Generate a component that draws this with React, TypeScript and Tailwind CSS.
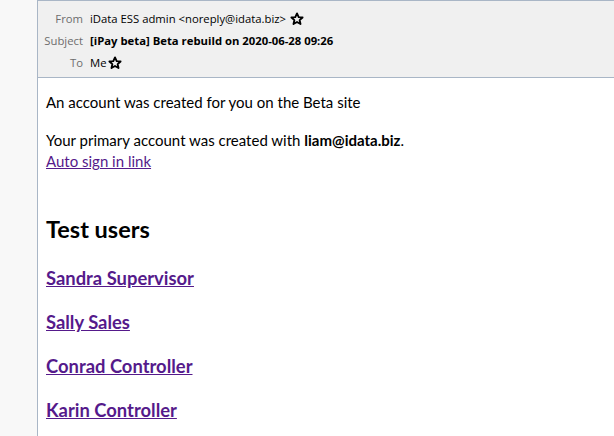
function StarIcon() {
  return (
    <svg width="14" height="14" viewBox="0 0 24 24" className="inline-block">
      <polygon
        points="12,2.5 14.9,8.8 21.6,9.4 16.5,13.9 18,20.6 12,17.1 6,20.6 7.5,13.9 2.4,9.4 9.1,8.8"
        fill="none"
        stroke="#000"
        strokeWidth="3.2"
        strokeLinejoin="round"
      />
    </svg>
  )
}

const users = ["Sandra Supervisor", "Sally Sales", "Conrad Controller", "Karin Controller"]

export default function App() {
  return (
    <div className="flex h-[436px] w-[614px] overflow-hidden bg-[#f8f8f8]">
      <div className="w-[37px] shrink-0" />
      <div className="flex flex-1 flex-col border-l border-[#a9b6c6] bg-white">
        {/* Header */}
        <div className="border-y border-[#a9b6c6] bg-[#f0f0f0] pt-[7px] pb-[3px] font-['Open_Sans',sans-serif] text-[11.3px] text-black">
          <div className="flex h-[22px] items-center">
            <span className="w-[45px] text-right text-[#6d6d6d]">From</span>
            <span className="ml-[7px] flex items-center gap-[4px]">
              iData ESS admin &lt;noreply@idata.biz&gt;
              <StarIcon />
            </span>
          </div>
          <div className="flex h-[22px] items-center">
            <span className="w-[45px] text-right text-[#6d6d6d]">Subject</span>
            <span className="ml-[7px] font-bold">[iPay beta] Beta rebuild on 2020-06-28 09:26</span>
          </div>
          <div className="flex h-[22px] items-center">
            <span className="w-[45px] text-right text-[#6d6d6d]">To</span>
            <span className="ml-[7px] flex items-center gap-[1px]">
              Me
              <StarIcon />
            </span>
          </div>
        </div>

        {/* Body */}
        <div className="px-[8px] pt-[14px] font-['Lato',sans-serif] text-[15px] leading-[21px] text-black">
          <p>An account was created for you on the Beta site</p>
          <p className="mt-[17px]">
            Your primary account was created with <b>liam@idata.biz</b>.
          </p>
          <a href="#" className="text-[#551a8b] underline">
            Auto sign in link
          </a>
          <h2 className="mt-[42px] text-[23.5px] font-bold leading-[30px]">Test users</h2>
          <div className="mt-[22px] flex flex-col gap-[20px]">
            {users.map((u) => (
              <a key={u} href="#" className="text-[18.4px] font-bold leading-[24px] text-[#551a8b] underline">
                {u}
              </a>
            ))}
          </div>
        </div>
      </div>
    </div>
  )
}
